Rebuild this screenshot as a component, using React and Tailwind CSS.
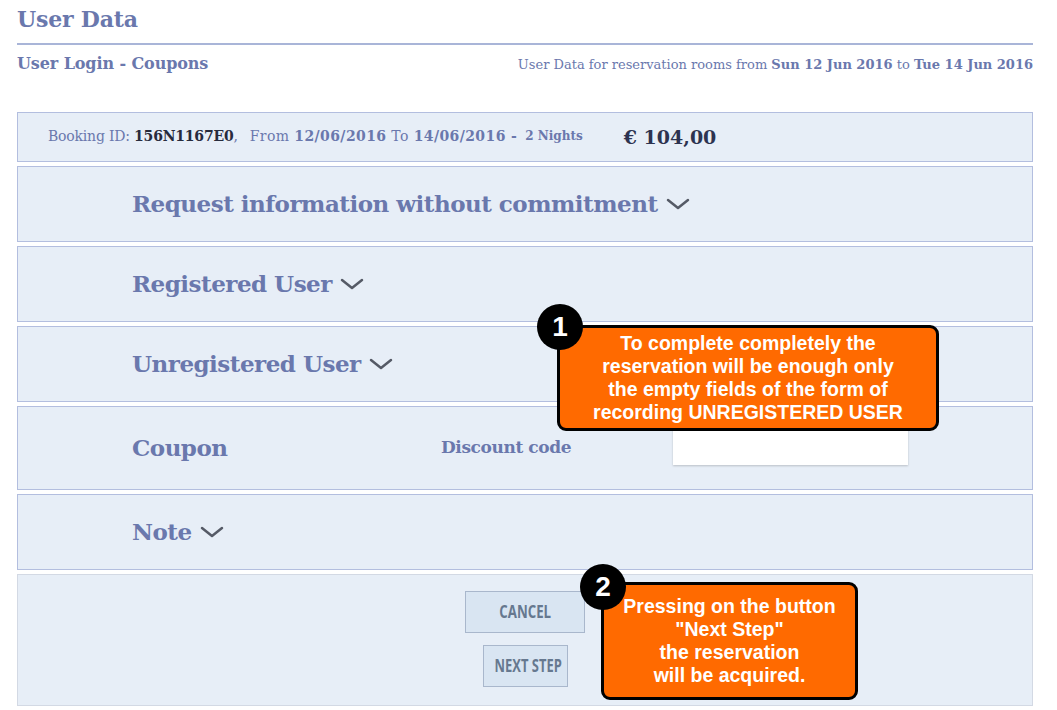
import React from 'react';

const serif = { fontFamily: '"DejaVu Serif", "Liberation Serif", serif' };

const Chevron = () => (
  <svg width="24" height="14" viewBox="0 0 24 14" className="inline-block ml-[8px] align-middle">
    <path d="M2 3 L12 11 L22 3" fill="none" stroke="#555a66" strokeWidth="2.5" strokeLinecap="round" strokeLinejoin="round" />
  </svg>
);

const Section = ({ title, children, h = 'h-[76px]' }) => (
  <div className={`${h} bg-[#e7eef7] border border-[#b3bedf] flex items-center pl-[114px]`}>
    {children || (
      <h2 className="text-[23px] font-bold text-[#6a78ad] tracking-[-0.5px] flex items-center">
        {title}
        <Chevron />
      </h2>
    )}
  </div>
);

const Callout = ({ num, className, circleClass, children }) => (
  <div className={`absolute ${className}`}>
    <div className="w-full h-full bg-[#ff6a00] border-[3px] border-black rounded-[9px] flex items-center justify-center text-center text-white font-bold text-[19.5px] leading-[23px]" style={{ fontFamily: '"Liberation Sans", Arial, sans-serif' }}>
      {children}
    </div>
    <div className={`absolute w-[46px] h-[46px] rounded-full bg-black text-white font-bold text-[28px] flex items-center justify-center ${circleClass}`} style={{ fontFamily: '"Liberation Sans", Arial, sans-serif' }}>
      {num}
    </div>
  </div>
);

export default function App() {
  return (
    <div className="relative w-[1057px] h-[710px] bg-white pl-[17px] pr-[24px] pt-[5px] text-[#6a78ad]" style={serif}>
      <h1 className="text-[22px] font-bold leading-[29px] tracking-[-0.2px]">User Data</h1>
      <div className="mt-[9px] h-[2px] bg-[#a9b5d8]" />
      <div className="flex items-baseline justify-between mt-[7px]">
        <span className="text-[16px] font-bold tracking-[-0.1px]">User Login - Coupons</span>
        <span className="text-[13px]">
          User Data for reservation rooms from <b>Sun 12 Jun 2016</b> to <b>Tue 14 Jun 2016</b>
        </span>
      </div>

      <div className="mt-[36px] flex flex-col gap-[4px]">
        <div className="h-[50px] bg-[#e7eef7] border border-[#b3bedf] flex items-center pl-[30px] text-[14px] pb-[2px]">
          <span className="tracking-[-0.2px]">Booking ID: <b className="text-[#272b3d]">156N1167E0</b>,</span>
          <span className="ml-[12px] tracking-[0.4px]">From <b>12/06/2016</b> To <b>14/06/2016 -</b></span>
          <span className="ml-[8px] text-[12px] font-bold">2 Nights</span>
          <span className="ml-[41px] text-[19px] font-bold text-[#2d3350] mt-[2px]">€ 104,00</span>
        </div>

        <Section title="Request information without commitment" />
        <Section title="Registered User" />
        <Section title="Unregistered User" />
        <Section h="h-[84px]">
          <h2 className="text-[23px] font-bold tracking-[-0.5px] w-[309px]">Coupon</h2>
          <span className="text-[17px] font-bold w-[232px] tracking-[-0.4px]">Discount code</span>
          <input className="self-start mt-[13px] w-[235px] h-[45px] bg-white shadow-[0_1px_2px_rgba(0,0,0,0.2)] outline-none" />
        </Section>
        <Section title="Note" />

        <div className="h-[132px] bg-[#e7eef7] border border-[#d3d9e4] flex flex-col items-center pt-[16px] gap-[12px]" style={{ fontFamily: '"Open Sans", sans-serif' }}>
          <button className="w-[120px] h-[42px] bg-[#d9e5f2] border border-[#a9b7cc] text-[#66788f] font-bold text-[17px]">
            <span className="inline-block scale-x-[0.78]">CANCEL</span>
          </button>
          <button className="w-[85px] h-[42px] bg-[#d9e5f2] border border-[#a9b7cc] text-[#66788f] font-bold text-[17px] whitespace-nowrap">
            <span className="inline-block scale-x-[0.76]">NEXT STEP</span>
          </button>
        </div>
      </div>

      <Callout num="1" className="left-[557px] top-[325px] w-[382px] h-[106px]" circleClass="left-[-20px] top-[-21px]">
        <div>
          To complete completely the<br />
          reservation will be enough only<br />
          the empty fields of the form of<br />
          recording UNREGISTERED USER
        </div>
      </Callout>

      <Callout num="2" className="left-[601px] top-[582px] w-[257px] h-[118px]" circleClass="left-[-21px] top-[-18px]">
        <div>
          Pressing on the button<br />
          "Next Step"<br />
          the reservation<br />
          will be acquired.
        </div>
      </Callout>
    </div>
  );
}
